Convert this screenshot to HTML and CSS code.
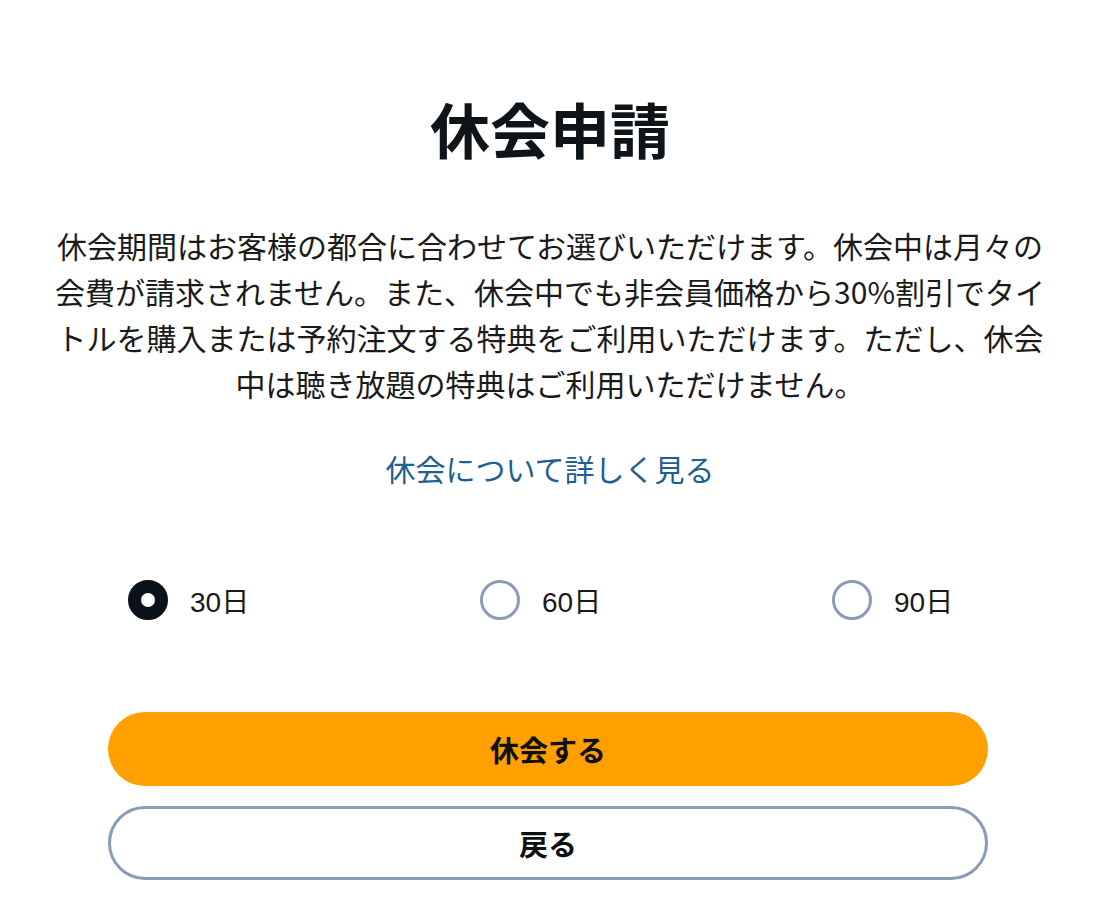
FILE: index.html
```html
<!DOCTYPE html>
<html lang="ja">
<head>
    <meta charset="utf-8">
    <title>休会申請</title>
    <link rel="stylesheet" href="styles.css">
</head>
<body>

<div class="page">
    <h1 class="title">休会申請</h1>

    <p class="desc">休会期間はお客様の都合に合わせてお選びいただけます。休会中は月々の会費が請求されません。また、休会中でも非会員価格から30%割引でタイトルを購入または予約注文する特典をご利用いただけます。ただし、休会中は聴き放題の特典はご利用いただけません。</p>

    <a class="more" href="#">休会について詳しく見る</a>

    <div class="options">
        <label class="option">
            <input type="radio" name="period" value="30" checked>
            <span class="mark"></span>
            <span class="days">30日</span>
        </label>
        <label class="option">
            <input type="radio" name="period" value="60">
            <span class="mark"></span>
            <span class="days">60日</span>
        </label>
        <label class="option">
            <input type="radio" name="period" value="90">
            <span class="mark"></span>
            <span class="days">90日</span>
        </label>
    </div>

    <div class="actions">
        <button class="btn btn-main">休会する</button>
        <button class="btn btn-back">戻る</button>
    </div>
</div>

</body>
</html>
```

FILE: styles.css
```css
body {
    margin: 0;
    background: #fff;
    color: #0f1419;
    font-family: "Noto Sans CJK JP", "Noto Sans", sans-serif;
}

.page {
    width: 1000px;
    margin: 0 auto;
    padding-top: 83px;
    display: flex;
    flex-direction: column;
    align-items: center;
}

.title {
    margin: 0;
    font-size: 60px;
    line-height: 90px;
    font-weight: 700;
    color: #0f1419;
}

.desc {
    margin: 49px 0 0;
    font-size: 30px;
    line-height: 46px;
    text-align: center;
    color: #1a1a1a;
}

.more {
    margin-top: 40px;
    font-size: 30px;
    line-height: 44px;
    color: #1f5f91;
    text-decoration: none;
}

.options {
    align-self: stretch;
    margin-top: 90px;
    margin-left: 78px;
    display: grid;
    grid-template-columns: 352px 352px 1fr;
}

.option {
    display: flex;
    align-items: center;
    gap: 22px;
    cursor: pointer;
}

.option input {
    display: none;
}

.mark {
    width: 40px;
    height: 40px;
    box-sizing: border-box;
    border-radius: 50%;
    border: 3px solid #8a9cb8;
}

.option input:checked + .mark {
    border: 13px solid #0a1118;
}

.days {
    font-family: "Liberation Sans", "Noto Sans CJK JP", sans-serif;
    font-size: 28px;
    color: #1a1a1a;
}

.actions {
    align-self: stretch;
    margin: 92px 62px 0 58px;
    display: flex;
    flex-direction: column;
    gap: 20px;
}

.btn {
    height: 74px;
    border-radius: 37px;
    font-family: "Noto Sans CJK JP", sans-serif;
    font-size: 29px;
    font-weight: 700;
    color: #0f1111;
    cursor: pointer;
}

.btn-main {
    background: #ffa000;
    border: none;
}

.btn-back {
    background: #fff;
    border: 3px solid #8a9cb8;
}
```
